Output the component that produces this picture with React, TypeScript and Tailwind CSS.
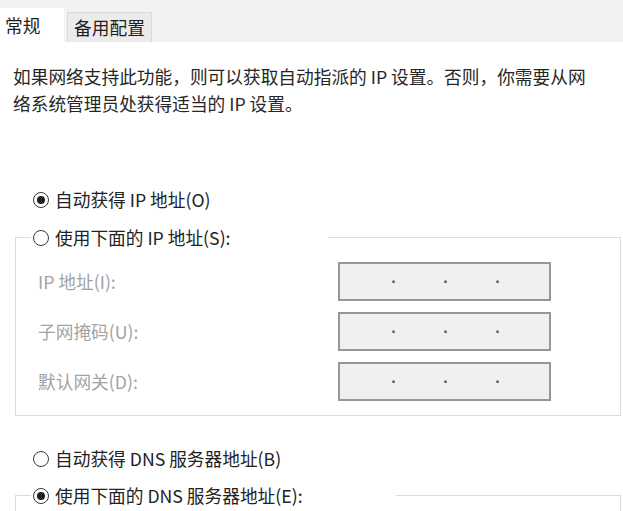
import React from "react";

const font = { fontFamily: '"Noto Sans CJK SC", "Noto Sans", sans-serif' };

function Radio({ checked, label }: { checked?: boolean; label: string }) {
  return (
    <div className="flex items-center h-[27px] whitespace-nowrap">
      <span className="w-[16px] h-[16px] rounded-full border border-[#3a3a3a] bg-white flex items-center justify-center shrink-0">
        {checked && <span className="w-[8px] h-[8px] rounded-full bg-[#1f1f1f]" />}
      </span>
      <span className="ml-[6px] text-[17.7px] leading-[27px] text-[#222]">{label}</span>
    </div>
  );
}

function IpBox() {
  return (
    <div className="w-[213px] h-[39px] border-2 border-[#979797] bg-[#f0f0f0] flex items-center pl-[28px] text-[#555] text-[16px] leading-none" style={{ fontFamily: '"Liberation Sans", sans-serif' }}>
      <span className="w-[52px] text-center font-bold">·</span>
      <span className="w-[52px] text-center font-bold">·</span>
      <span className="w-[52px] text-center font-bold">·</span>
    </div>
  );
}

function Row({ label }: { label: string }) {
  return (
    <div className="flex items-center h-[39px]">
      <span className="w-[300px] text-[17.7px] text-[#a3a3a3] leading-[27px] whitespace-nowrap">{label}</span>
      <IpBox />
    </div>
  );
}

export default function App() {
  return (
    <div className="w-[623px] h-[511px] overflow-hidden bg-white" style={font}>
      <div className="h-[42px] bg-[#f2f2f2] flex items-end">
        <div className="w-[64px] h-[34px] bg-white pl-[5px] flex items-center text-[17.7px] text-[#1e1e1e]">常规</div>
        <div className="ml-[3px] w-[85px] h-[30px] bg-[#ebebeb] border border-b-0 border-[#dadada] flex items-center justify-center text-[17.7px] text-[#1e1e1e]">
          备用配置
        </div>
      </div>
      <div className="pt-[21px] pl-[13px] text-[17.7px] leading-[27px] text-[#262626] whitespace-nowrap">
        如果网络支持此功能，则可以获取自动指派的 IP 设置。否则，你需要从网
        <br />
        络系统管理员处获得适当的 IP 设置。
      </div>
      <div className="mt-[69px] pl-[33px]">
        <Radio checked label="自动获得 IP 地址(O)" />
      </div>
      <fieldset className="mt-[11px] ml-[15px] w-[606px] border border-[#dcdcdc] px-0 pb-[14px]">
        <legend className="ml-[15px] w-[297px] pl-[2px] bg-white">
          <Radio label="使用下面的 IP 地址(S):" />
        </legend>
        <div className="pt-[11px] pl-[22px] flex flex-col gap-[11px]">
          <Row label="IP 地址(I):" />
          <Row label="子网掩码(U):" />
          <Row label="默认网关(D):" />
        </div>
      </fieldset>
      <div className="mt-[29px] pl-[33px]">
        <Radio label="自动获得 DNS 服务器地址(B)" />
      </div>
      <fieldset className="mt-[10px] ml-[15px] w-[606px] h-[200px] border border-[#dcdcdc] px-0">
        <legend className="ml-[15px] w-[365px] pl-[2px] bg-white">
          <Radio checked label="使用下面的 DNS 服务器地址(E):" />
        </legend>
      </fieldset>
    </div>
  );
}
